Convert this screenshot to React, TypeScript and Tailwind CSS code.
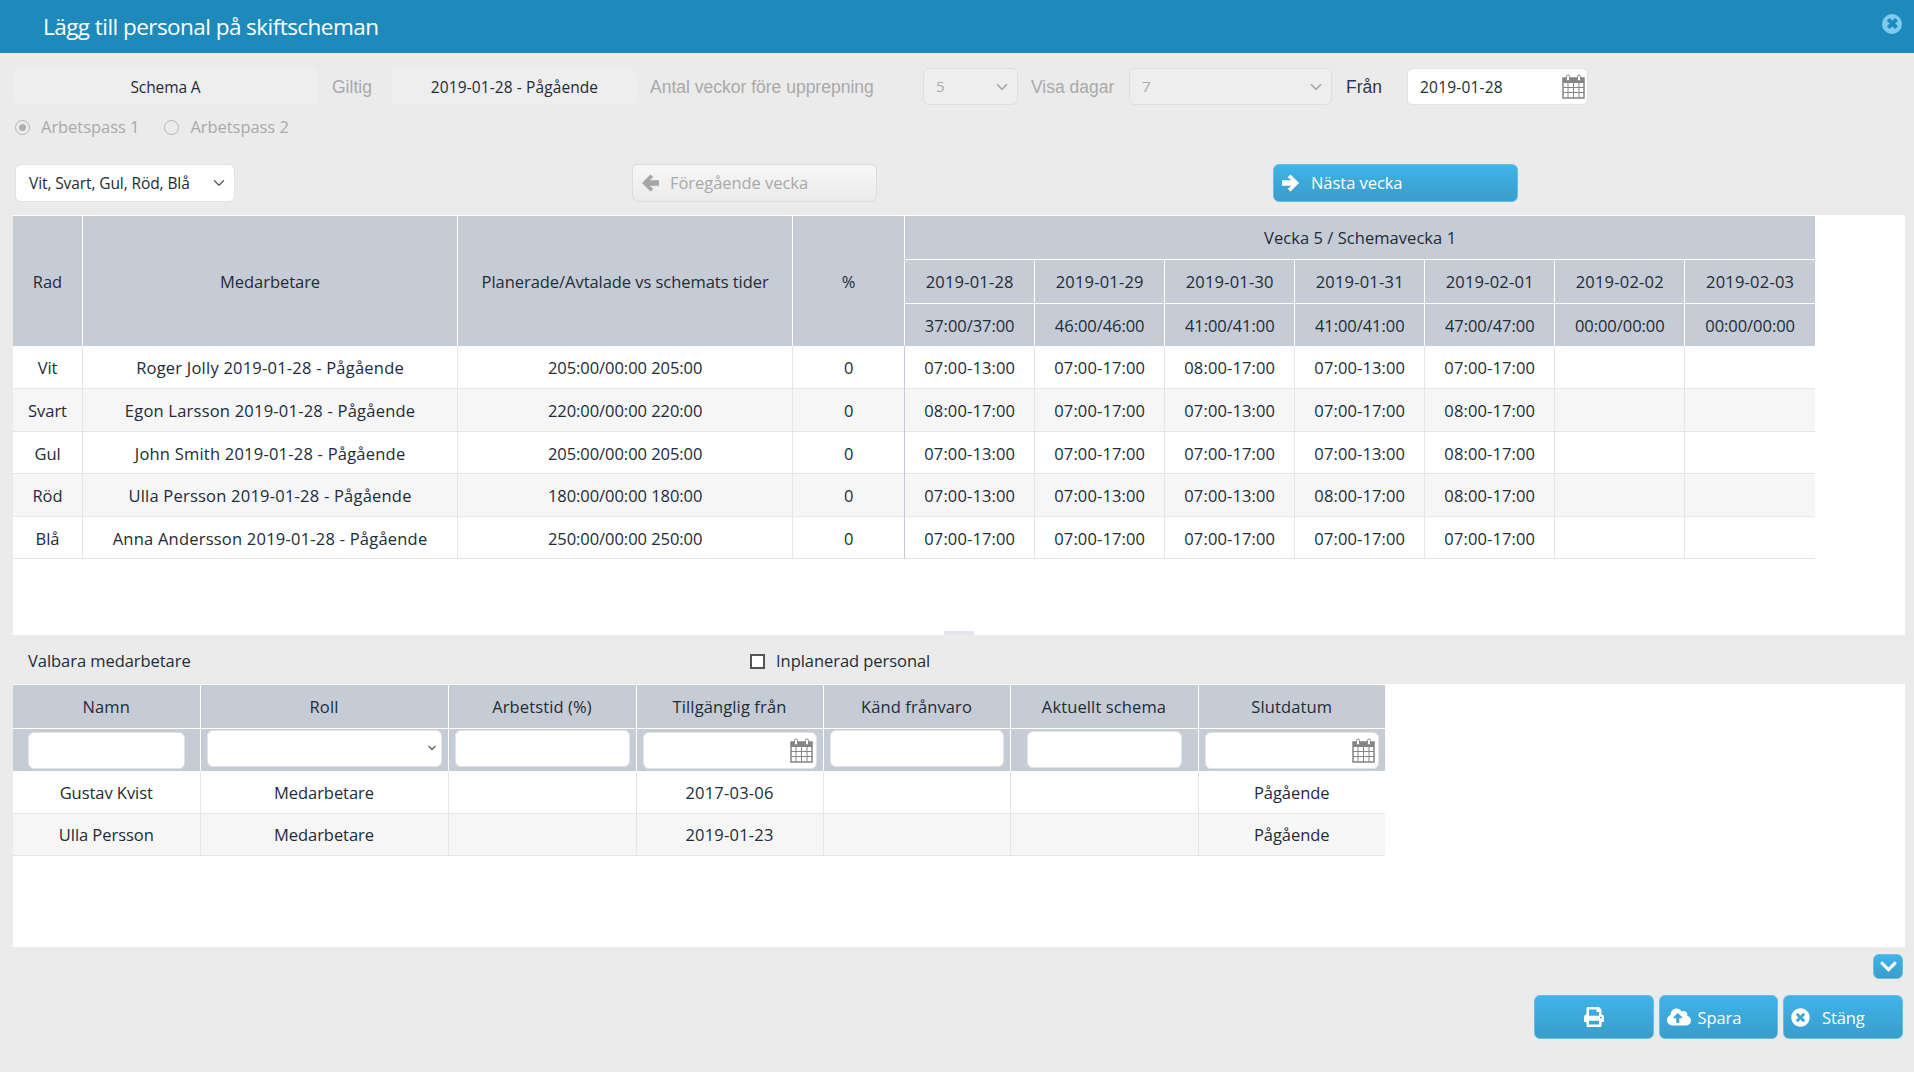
import { FC, ReactNode } from 'react'
import { FaChevronDown, FaCloudUploadAlt, FaPrint, FaTimesCircle } from 'react-icons/fa'
import { LuChevronDown } from 'react-icons/lu'

const days = ['2019-01-28', '2019-01-29', '2019-01-30', '2019-01-31', '2019-02-01', '2019-02-02', '2019-02-03']
const totals = ['37:00/37:00', '46:00/46:00', '41:00/41:00', '41:00/41:00', '47:00/47:00', '00:00/00:00', '00:00/00:00']

const scheduleRows = [
    { rad: 'Vit', name: 'Roger Jolly 2019-01-28 - Pågående', planned: '205:00/00:00 205:00', shifts: ['07:00-13:00', '07:00-17:00', '08:00-17:00', '07:00-13:00', '07:00-17:00'] },
    { rad: 'Svart', name: 'Egon Larsson 2019-01-28 - Pågående', planned: '220:00/00:00 220:00', shifts: ['08:00-17:00', '07:00-17:00', '07:00-13:00', '07:00-17:00', '08:00-17:00'] },
    { rad: 'Gul', name: 'John Smith 2019-01-28 - Pågående', planned: '205:00/00:00 205:00', shifts: ['07:00-13:00', '07:00-17:00', '07:00-17:00', '07:00-13:00', '08:00-17:00'] },
    { rad: 'Röd', name: 'Ulla Persson 2019-01-28 - Pågående', planned: '180:00/00:00 180:00', shifts: ['07:00-13:00', '07:00-13:00', '07:00-13:00', '08:00-17:00', '08:00-17:00'] },
    { rad: 'Blå', name: 'Anna Andersson 2019-01-28 - Pågående', planned: '250:00/00:00 250:00', shifts: ['07:00-17:00', '07:00-17:00', '07:00-17:00', '07:00-17:00', '07:00-17:00'] },
]

const staffRows = [
    { name: 'Gustav Kvist', role: 'Medarbetare', from: '2017-03-06', end: 'Pågående' },
    { name: 'Ulla Persson', role: 'Medarbetare', from: '2019-01-23', end: 'Pågående' },
]

const staffHeaders = ['Namn', 'Roll', 'Arbetstid (%)', 'Tillgänglig från', 'Känd frånvaro', 'Aktuellt schema', 'Slutdatum']

const CalendarIcon: FC = () => (
    <svg width={23} height={25} viewBox="0 0 23 25" className="shrink-0">
        <rect x="1" y="4" width="21" height="20" fill="#fff" stroke="#858585" strokeWidth="1.5" />
        <rect x="1" y="4" width="21" height="5" fill="#858585" />
        <path d="M1 13.5h21M1 18.5h21M6 9v15M11.5 9v15M17 9v15" stroke="#858585" strokeWidth="1" fill="none" />
        <rect x="4.5" y="1" width="3" height="6" rx="1.5" fill="#fff" stroke="#858585" />
        <rect x="15.5" y="1" width="3" height="6" rx="1.5" fill="#fff" stroke="#858585" />
    </svg>
)

// chunky glyph style arrow, the ones in the icon packs are too thin
const ArrowIcon: FC<{ dir: 'left' | 'right'; className?: string }> = ({ dir, className }) => (
    <svg width={19} height={20} viewBox="0 0 20 20" className={`shrink-0 ${dir === 'right' ? '-scale-x-100' : ''} ${className ?? ''}`}>
        <path d="M10 1 L1 10 L10 19 L13 16 L9 12.8 H19 V7.2 H9 L13 4 Z" fill="currentColor" />
    </svg>
)

const Radio: FC<{ checked?: boolean; label: string; className?: string }> = ({ checked, label, className }) => (
    <span className={`flex items-center gap-[11px] ${className ?? ''}`}>
        <span className="flex h-[15px] w-[15px] items-center justify-center rounded-full border border-[#b5b5b5] bg-[#ececec]">
            {checked && <span className="h-[7px] w-[7px] rounded-full bg-[#b0b0b0]" />}
        </span>
        <span className="text-[#a9a9a9]">{label}</span>
    </span>
)

const BlueButton: FC<{ className: string; children: ReactNode }> = ({ className, children }) => (
    <button className={`flex items-center rounded-[6px] border border-[#69bde4] bg-gradient-to-b from-[#3fb4e8] to-[#399dcb] text-white ${className}`}>
        {children}
    </button>
)

const FilterInput: FC<{ className: string; calendar?: boolean }> = ({ className, calendar }) => (
    <div className={`flex items-center justify-end rounded-[6px] border border-[#e3e3e3] bg-white pr-[3px] ${className}`}>
        {calendar && <CalendarIcon />}
    </div>
)

const App: FC = () => {
    return (
        <div className="flex h-screen w-full flex-col overflow-hidden bg-[#ebebeb] font-['Open_Sans',sans-serif] text-[16.5px] text-[#222b38] tracking-[-0.05px]">
            <header className="flex h-[53px] shrink-0 items-center justify-between bg-[#1e8abc] pl-[43px] pr-[12px] text-white">
                <h1 className="mt-[1px] text-[22.5px] font-normal tracking-[-0.55px]">Lägg till personal på skiftscheman</h1>
                <span className="-mt-[6px] flex h-[20px] w-[20px] items-center justify-center rounded-full bg-[#7fcbed]">
                    <span className="text-[15px] leading-none font-bold text-[#1e8abc]">✖</span>
                </span>
            </header>

            {/* settings */}
            <div className="flex h-[37px] mt-[15px] ml-[13px] shrink-0 items-center">
                <div className="flex h-full w-[305px] items-center justify-center rounded-[6px] bg-[#eeeeee] pt-[3px] text-[15.5px] tracking-[-0.1px]">Schema A</div>
                <span className="ml-[14px] w-[60px] font-['Liberation_Sans',sans-serif] text-[17.5px] tracking-normal text-[#a9a9a9] mt-[1px]">Giltig</span>
                <div className="flex h-full w-[245px] items-center justify-center rounded-[6px] bg-[#eeeeee] pt-[3px] text-[15.5px] tracking-[0.1px]">2019-01-28 - Pågående</div>
                <span className="ml-[13px] w-[260px] font-['Liberation_Sans',sans-serif] text-[17.5px] tracking-normal text-[#a9a9a9] mt-[1px]">Antal veckor före upprepning</span>
                <div className="ml-[13px] flex h-full w-[95px] items-center justify-between rounded-[6px] border border-[#dedede] bg-[#eeeeee] pl-[12px] pr-[6px] text-[15px] text-[#a9a9a9]">
                    5<LuChevronDown size={18} className="text-[#a0a0a0]" />
                </div>
                <span className="ml-[13px] w-[85px] font-['Liberation_Sans',sans-serif] text-[17.5px] tracking-normal text-[#a9a9a9] mt-[1px] whitespace-nowrap">Visa dagar</span>
                <div className="ml-[13px] flex h-full w-[203px] items-center justify-between rounded-[6px] border border-[#dedede] bg-[#eeeeee] pl-[12px] pr-[6px] text-[15px] text-[#a9a9a9]">
                    7<LuChevronDown size={18} className="text-[#a0a0a0]" />
                </div>
                <span className="ml-[14px] w-[61px] font-['Liberation_Sans',sans-serif] text-[17.5px] tracking-normal text-[#2b3a4c] mt-[1px]">Från</span>
                <div className="flex h-full w-[181px] items-center justify-between rounded-[6px] border border-[#e2e2e2] bg-white pl-[12px] pr-[2px] text-[15.5px] tracking-[0.2px]">
                    <span className="pt-[2px]">2019-01-28</span><CalendarIcon />
                </div>
            </div>

            <div className="ml-[15px] mt-[12px] flex h-[20px] shrink-0 items-center">
                <Radio checked label="Arbetspass 1" />
                <Radio label="Arbetspass 2" className="ml-[25px]" />
            </div>

            <div className="mt-[27px] ml-[15px] flex h-[38px] shrink-0 items-center">
                <div className="flex h-full w-[220px] items-center justify-between rounded-[6px] border border-[#e2e2e2] bg-white pl-[13px] pr-[6px] text-[15.5px] tracking-[-0.1px]">
                    <span className="pt-[2px]">Vit, Svart, Gul, Röd, Blå</span><LuChevronDown size={18} className="text-[#666]" />
                </div>
                <button className="ml-[397px] flex h-full w-[245px] items-center rounded-[6px] border border-[#dcdcdc] bg-gradient-to-b from-[#f7f7f7] to-[#ebebeb] pl-[8px] text-[#a9a9a9]">
                    <ArrowIcon dir="left" className="mr-[10px] text-[#a5a5a5]" /><span className="pt-[1px]">Föregående vecka</span>
                </button>
                <BlueButton className="ml-[396px] h-full w-[245px] pl-[7px]">
                    <ArrowIcon dir="right" className="mr-[11px]" /><span className="pt-[1px]">Nästa vecka</span>
                </BlueButton>
            </div>

            {/* schedule table */}
            <div className="mt-[13px] ml-[13px] h-[420px] w-[1892px] shrink-0 bg-white pt-[1px]">
                <table className="w-[1802px] table-fixed border-collapse text-center">
                    <colgroup>
                        <col className="w-[69.5px]" />
                        <col className="w-[375px]" />
                        <col className="w-[335px]" />
                        <col className="w-[112px]" />
                        {days.map(d => <col key={d} className="w-[130px]" />)}
                    </colgroup>
                    <thead className="bg-[#c5ccd5] [&_th]:pt-[3px]">
                        <tr className="h-[43px]">
                            <th rowSpan={3} className="border-r border-white font-normal">Rad</th>
                            <th rowSpan={3} className="border-r border-white font-normal">Medarbetare</th>
                            <th rowSpan={3} className="border-r border-white font-normal">Planerade/Avtalade vs schemats tider</th>
                            <th rowSpan={3} className="border-r border-white font-normal">%</th>
                            <th colSpan={7} className="font-normal tracking-[0.05px]">Vecka 5 / Schemavecka 1</th>
                        </tr>
                        <tr className="h-[44px]">
                            {days.map(d => <th key={d} className="border-t border-r border-white font-normal tracking-[0.2px] last:border-r-0">{d}</th>)}
                        </tr>
                        <tr className="h-[43px]">
                            {totals.map((t, i) => <th key={i} className="border-t border-r border-white font-normal last:border-r-0">{t}</th>)}
                        </tr>
                    </thead>
                    <tbody>
                        {scheduleRows.map((row, i) => (
                            <tr key={row.rad} className={`h-[42.6px] border-b border-[#e6e6e6] *:pt-[3px] ${i % 2 ? 'bg-[#f6f6f6]' : 'bg-white'}`}>
                                <td className="border-r border-[#e6e6e6]">{row.rad}</td>
                                <td className="border-r border-[#e6e6e6] tracking-[0.22px]">{row.name}</td>
                                <td className="border-r border-[#e6e6e6]">{row.planned}</td>
                                <td className="border-r border-[#c5ccd5]">0</td>
                                {days.map((d, j) => (
                                    <td key={d} className="border-r border-[#e6e6e6] tracking-[0.12px] last:border-r-0">{row.shifts[j]}</td>
                                ))}
                            </tr>
                        ))}
                    </tbody>
                </table>
            </div>

            {/* available staff */}
            <div className="relative flex h-[49px] shrink-0 items-center pl-[28px] pt-[3px]">
                <span className="absolute -top-[4px] left-[944px] h-[4px] w-[30px] bg-[#e3e7ec]" />
                <span className="w-[722px]">Valbara medarbetare</span>
                <span className="h-[15px] w-[15px] border-2 border-[#555] bg-white" />
                <span className="ml-[11px]">Inplanerad personal</span>
            </div>

            <div className="ml-[13px] h-[263px] w-[1892px] shrink-0 bg-white pt-[1px]">
                <table className="w-[1372px] table-fixed border-collapse text-center">
                    <colgroup>
                        <col className="w-[187px]" />
                        <col className="w-[248px]" />
                        <col className="w-[188px]" />
                        <col className="w-[187px]" />
                        <col className="w-[187px]" />
                        <col className="w-[188px]" />
                        <col className="w-[187px]" />
                    </colgroup>
                    <thead className="bg-[#c5ccd5]">
                        <tr className="h-[43px] *:pt-[3px]">
                            {staffHeaders.map(h => <th key={h} className="border-r border-b border-white font-normal tracking-[0.12px] last:border-r-0">{h}</th>)}
                        </tr>
                        <tr className="h-[43px]">
                            <th className="border-r border-white"><FilterInput className="mx-[15px] mt-[1px] h-[37px]" /></th>
                            <th className="border-r border-white">
                                <div className="mx-[6px] -mt-[3px] flex h-[37px] items-center justify-end rounded-[6px] border border-[#e3e3e3] bg-white pr-[3px]">
                                    <LuChevronDown size={12} strokeWidth={3} className="text-[#6f6f6f]" />
                                </div>
                            </th>
                            <th className="border-r border-white"><FilterInput className="mx-[6px] -mt-[3px] h-[37px]" /></th>
                            <th className="border-r border-white"><FilterInput calendar className="mx-[6px] mt-[1px] h-[37px]" /></th>
                            <th className="border-r border-white"><FilterInput className="mx-[6px] -mt-[3px] h-[37px]" /></th>
                            <th className="border-r border-white"><FilterInput className="mx-[16px] -mt-[1px] h-[37px]" /></th>
                            <th><FilterInput calendar className="mx-[6px] mt-[1px] h-[37px]" /></th>
                        </tr>
                    </thead>
                    <tbody>
                        {staffRows.map((row, i) => (
                            <tr key={row.name} className={`h-[42px] border-b border-[#e6e6e6] *:pt-[3px] ${i % 2 ? 'bg-[#f6f6f6]' : 'bg-white'}`}>
                                <td className="border-r border-[#e6e6e6]">{row.name}</td>
                                <td className="border-r border-[#e6e6e6]">{row.role}</td>
                                <td className="border-r border-[#e6e6e6]" />
                                <td className="border-r border-[#e6e6e6] tracking-[0.2px]">{row.from}</td>
                                <td className="border-r border-[#e6e6e6]" />
                                <td className="border-r border-[#e6e6e6]" />
                                <td>{row.end}</td>
                            </tr>
                        ))}
                    </tbody>
                </table>
            </div>

            {/* footer */}
            <div className="mt-[7px] flex shrink-0 justify-end pr-[11px]">
                <BlueButton className="h-[25px] w-[30px] justify-center">
                    <FaChevronDown size={19} />
                </BlueButton>
            </div>
            <div className="mt-[16px] flex shrink-0 justify-end gap-[5px] pr-[11.5px] text-[16.5px] tracking-[-0.1px]">
                <BlueButton className="h-[44px] w-[119.5px] justify-center"><FaPrint size={20} /></BlueButton>
                <BlueButton className="h-[44px] w-[119.5px] pl-[7px]"><FaCloudUploadAlt size={24} className="mr-[7px]" /><span className="pt-[2px]">Spara</span></BlueButton>
                <BlueButton className="h-[44px] w-[119.5px] pl-[7px]"><FaTimesCircle size={19} className="mr-[12px]" /><span className="pt-[2px]">Stäng</span></BlueButton>
            </div>
        </div>
    )
}

export default App
